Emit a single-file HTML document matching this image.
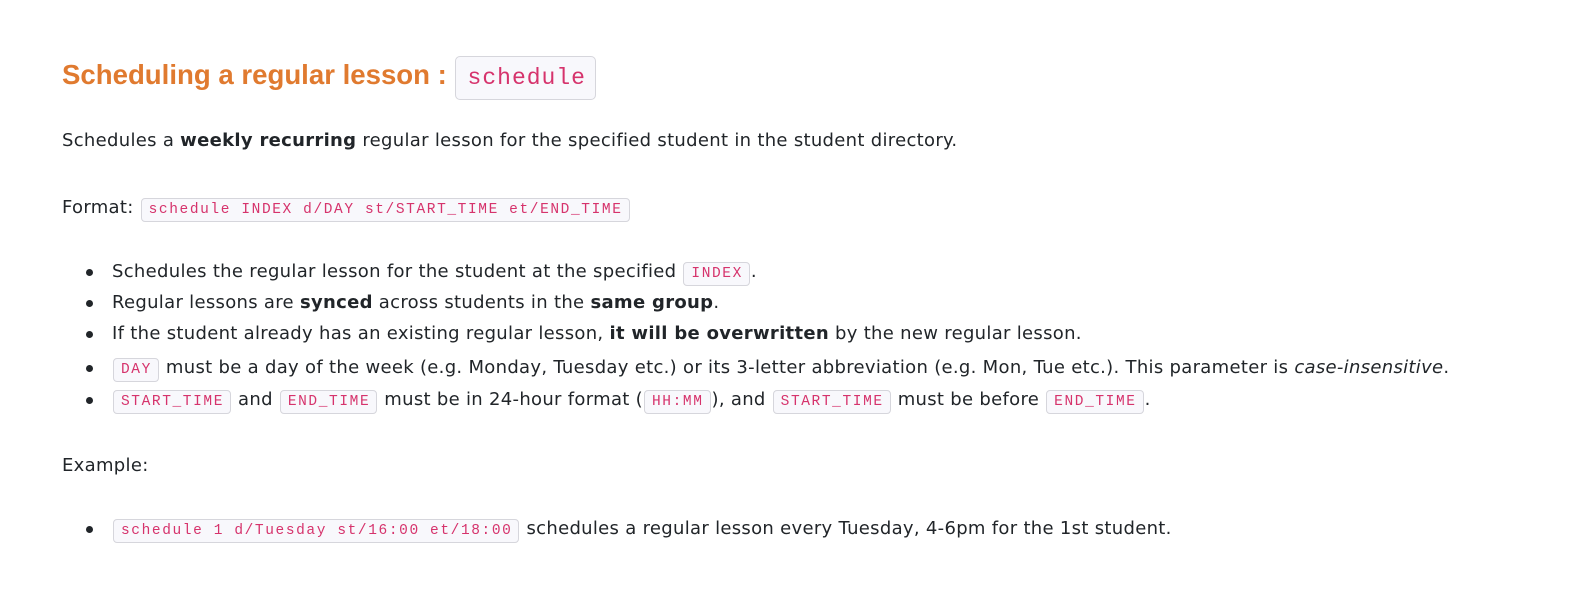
<!DOCTYPE html>
<html><head><meta charset="utf-8"><style>
body{margin:0;background:#fff;width:1576px;height:598px;overflow:hidden;font-family:"DejaVu Sans",sans-serif;color:#212529;font-size:18px;letter-spacing:0.3px}
.l{position:absolute;white-space:nowrap;line-height:24px}
code{font-family:"Liberation Mono",monospace;color:#d6336c;background:#f8f8fc;border:1.5px solid #d6d6dc;border-radius:4px;font-size:14.5px;letter-spacing:1.6px;padding:3px 6px 3px 7px;margin:0 1px}
h1{position:absolute;left:62px;top:52px;margin:0;font-family:"Liberation Sans",sans-serif;letter-spacing:0;font-size:27.6px;color:#e07a2f;font-weight:bold;line-height:46px;white-space:nowrap}
h1 code{font-size:23px;letter-spacing:1px;padding:8px 9px 8px 12px;border-radius:5px;font-weight:normal;margin:0}
.b::before{content:"";position:absolute;left:-26px;top:9px;width:7px;height:7px;border-radius:50%;background:#212529}
</style></head><body>
<h1>Scheduling a regular lesson : <code>schedule</code></h1>
<div class="l" style="left:62px;top:129px">Schedules a <b>weekly recurring</b> regular lesson for the specified student in the student directory.</div>
<div class="l" style="left:62px;top:196px">Format: <code>schedule INDEX d/DAY st/START_TIME et/END_TIME</code></div>
<div class="l b" style="left:112px;top:260px">Schedules the regular lesson for the student at the specified <code>INDEX</code>.</div>
<div class="l b" style="left:112px;top:291px">Regular lessons are <b>synced</b> across students in the <b>same group</b>.</div>
<div class="l b" style="left:112px;top:322px">If the student already has an existing regular lesson, <b>it will be overwritten</b> by the new regular lesson.</div>
<div class="l b" style="left:112px;top:356px"><code>DAY</code> must be a day of the week (e.g. Monday, Tuesday etc.) or its 3-letter abbreviation (e.g. Mon, Tue etc.). This parameter is <i>case-insensitive</i>.</div>
<div class="l b" style="left:112px;top:388px"><code>START_TIME</code> and <code>END_TIME</code> must be in 24-hour format (<code>HH:MM</code>), and <code>START_TIME</code> must be before <code>END_TIME</code>.</div>
<div class="l" style="left:62px;top:454px">Example:</div>
<div class="l b" style="left:112px;top:517px"><code>schedule 1 d/Tuesday st/16:00 et/18:00</code> schedules a regular lesson every Tuesday, 4-6pm for the 1st student.</div>
</body></html>
